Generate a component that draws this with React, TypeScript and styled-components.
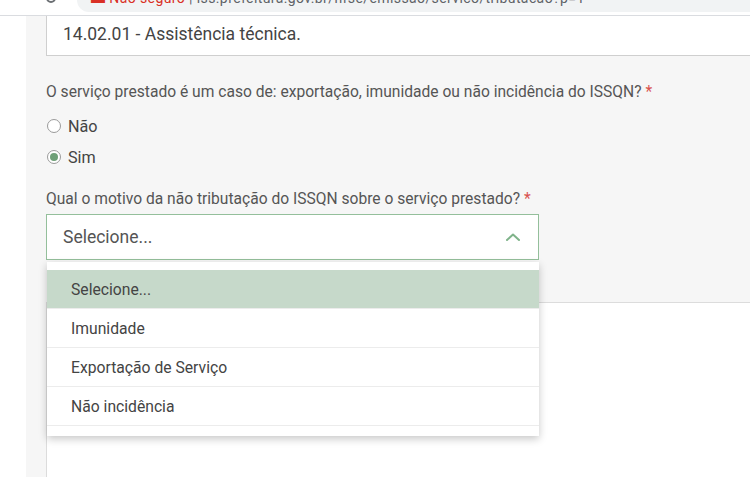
import React from "react";
import styled, { createGlobalStyle } from "styled-components";

const Global = createGlobalStyle`
  html, body { margin: 0; padding: 0; background: #ffffff; }
  body { font-family: Roboto, "Noto Sans", Arial, sans-serif; width: 750px; height: 477px; overflow: hidden; }
  * { box-sizing: border-box; }
`;

const Screen = styled.div`
  width: 750px;
  height: 477px;
  display: flex;
  flex-direction: column;
  overflow: hidden;
`;

const BrowserBar = styled.div`
  height: 16px;
  flex: none;
  display: flex;
  background: #ffffff;
  border-bottom: 1px solid #dadce0;
`;

const NavArea = styled.div`
  width: 77px;
  flex: none;
  position: relative;
  overflow: hidden;
`;

const NavGlyph = styled.div`
  position: absolute;
  left: 46px;
  top: -7px;
  width: 10px;
  height: 10px;
  border: 2px solid #6b6f73;
  border-radius: 50%;
`;

const AddressBar = styled.div`
  flex: 1;
  height: 12px;
  background: #f1f3f4;
  border-bottom-left-radius: 12px;
  overflow: hidden;
  position: relative;
`;

const AddressText = styled.span`
  position: absolute;
  left: 14px;
  bottom: 7px;
  font-size: 14px;
  line-height: 14px;
  color: #5f6368;
  white-space: nowrap;
  letter-spacing: 0.4px;
`;

const Secure = styled.span`
  color: #d93025;
`;

const Body = styled.div`
  flex: 1;
  display: flex;
  min-height: 0;
`;

const Gutter = styled.div`
  width: 26px;
  flex: none;
  background: #ffffff;
`;

const Main = styled.div`
  flex: 1;
  background: #f6f6f6;
  padding-left: 20px;
  display: flex;
  flex-direction: column;
  min-width: 0;
`;

const ReadOnlyField = styled.div`
  height: 40px;
  flex: none;
  background: #ffffff;
  border: 1px solid #cfcfcf;
  border-top: none;
  border-right: none;
  display: flex;
  align-items: center;
  padding: 0 0 4px 16px;
  font-size: 17.5px;
  color: #444;
`;

const Form = styled.div`
  display: flex;
  flex-direction: column;
  padding-top: 26px;
`;

const Label = styled.div`
  font-size: 15.6px;
  line-height: 20px;
  color: #555;
  white-space: nowrap;
`;

const Req = styled.span`
  color: #d9534f;
`;

const RadioGroup = styled.div`
  display: flex;
  flex-direction: column;
  gap: 11px;
  margin-top: 14px;
  margin-bottom: 22px;
`;

const RadioRow = styled.label`
  display: flex;
  align-items: center;
  gap: 7px;
  height: 20px;
  font-size: 16.2px;
  color: #444;
`;

const RadioCircle = styled.span<{ $checked?: boolean }>`
  width: 14px;
  height: 14px;
  margin-left: 1px;
  border-radius: 50%;
  border: 1px solid #9a9a9a;
  background: #ffffff;
  display: flex;
  align-items: center;
  justify-content: center;
  &::after {
    content: "";
    width: 8px;
    height: 8px;
    border-radius: 50%;
    background: ${(p) => (p.$checked ? "#6e9f77" : "transparent")};
  }
`;

const SelectWrap = styled.div`
  position: relative;
  width: 493px;
  margin-top: 5px;
`;

const SelectBox = styled.div`
  height: 46px;
  background: #ffffff;
  border: 1px solid #94bf9b;
  display: flex;
  align-items: center;
  justify-content: space-between;
  padding: 0 17px 0 16px;
  font-size: 17.5px;
  color: #555;
`;

const Menu = styled.div`
  position: absolute;
  left: 1px;
  right: 0;
  top: 48px;
  background: #ffffff;
  padding: 8px 0 10px;
  box-shadow: 0 3px 8px rgba(0, 0, 0, 0.22);
  z-index: 2;
`;

const Option = styled.div<{ $active?: boolean }>`
  height: 39px;
  display: flex;
  align-items: center;
  padding-left: 24px;
  font-size: 15.7px;
  color: #444;
  background: ${(p) => (p.$active ? "#c6d9ca" : "#ffffff")};
  border-bottom: 1px solid #ececec;
`;

const LowerPanel = styled.div`
  flex: 1;
  margin-top: 42px;
  background: #ffffff;
  border-top: 1px solid #dcdcdc;
  border-left: 1px solid #dcdcdc;
`;

const Chevron = () => (
  <svg width="16" height="10" viewBox="0 0 16 10" fill="none">
    <path d="M2 8 L8 2.5 L14 8" stroke="#7fb38a" strokeWidth="2" strokeLinecap="round" strokeLinejoin="round" />
  </svg>
);

const options = ["Selecione...", "Imunidade", "Exportação de Serviço", "Não incidência"];

export default function App() {
  return (
    <>
      <Global />
      <Screen>
        <BrowserBar>
          <NavArea>
            <NavGlyph />
          </NavArea>
          <AddressBar>
            <AddressText>
              <Secure>▬ Não seguro</Secure> | iss.prefeitura.gov.br/nfse/emissao/servico/tributacao?p=1
            </AddressText>
          </AddressBar>
        </BrowserBar>
        <Body>
          <Gutter />
          <Main>
            <ReadOnlyField>14.02.01 - Assistência técnica.</ReadOnlyField>
            <Form>
              <Label>
                O serviço prestado é um caso de: exportação, imunidade ou não incidência do ISSQN? <Req>*</Req>
              </Label>
              <RadioGroup>
                <RadioRow>
                  <RadioCircle />
                  Não
                </RadioRow>
                <RadioRow>
                  <RadioCircle $checked />
                  Sim
                </RadioRow>
              </RadioGroup>
              <Label>
                Qual o motivo da não tributação do ISSQN sobre o serviço prestado? <Req>*</Req>
              </Label>
              <SelectWrap>
                <SelectBox>
                  <span>Selecione...</span>
                  <Chevron />
                </SelectBox>
                <Menu>
                  {options.map((o, i) => (
                    <Option key={o} $active={i === 0}>
                      {o}
                    </Option>
                  ))}
                </Menu>
              </SelectWrap>
            </Form>
            <LowerPanel />
          </Main>
        </Body>
      </Screen>
    </>
  );
}
